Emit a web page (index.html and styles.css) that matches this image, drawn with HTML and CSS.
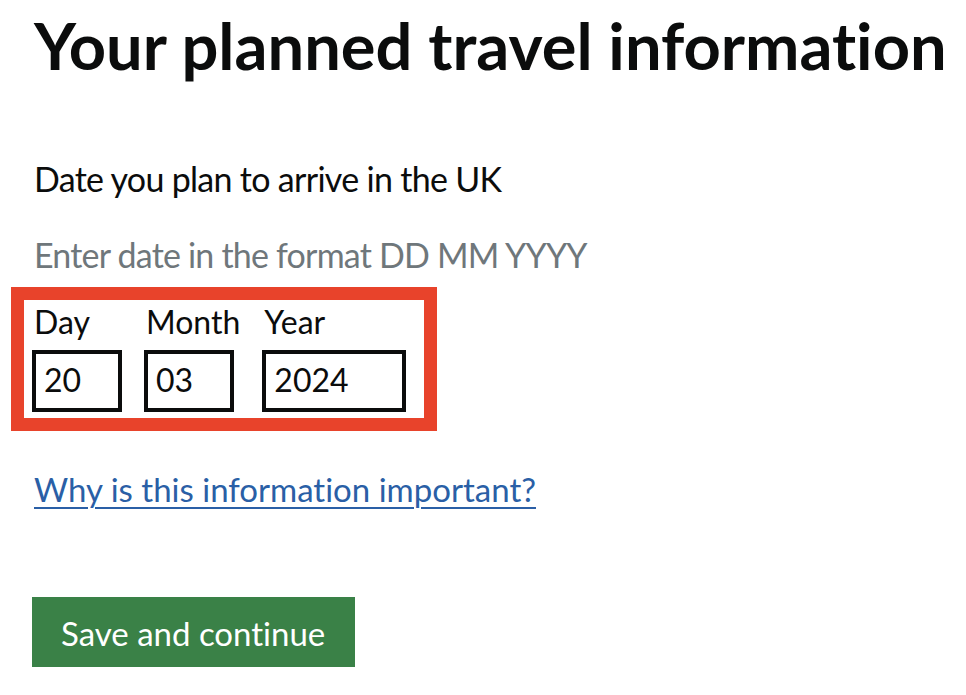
FILE: index.html
```html
<!DOCTYPE html>
<html lang="en">
<head>
<meta charset="utf-8">
<title>Your planned travel information</title>
<link rel="stylesheet" href="styles.css">
</head>
<body>
<main class="page">
  <h1 class="title">Your planned travel information</h1>
  <div class="question">Date you plan to arrive in the UK</div>
  <div class="hint">Enter date in the format DD MM YYYY</div>
  <div class="highlight">
    <div class="date-item day">
      <label class="date-label">Day</label>
      <div class="date-input w2">20</div>
    </div>
    <div class="date-item month">
      <label class="date-label">Month</label>
      <div class="date-input w2">03</div>
    </div>
    <div class="date-item year">
      <label class="date-label">Year</label>
      <div class="date-input w4">2024</div>
    </div>
  </div>
  <a class="link" href="#">Why is this information important?</a>
  <button class="button" type="button">Save and continue</button>
</main>
</body>
</html>
```

FILE: styles.css
```css
html, body {
  margin: 0;
  padding: 0;
  background: #ffffff;
}
body {
  font-family: Lato, "Liberation Sans", sans-serif;
  font-variant-ligatures: none;
  color: #0b0c0c;
}
.page {
  display: flex;
  flex-direction: column;
  align-items: flex-start;
  padding: 0 0 0 34px;
}
.title {
  margin: 7px 0 0 0;
  font-size: 65px;
  font-weight: 700;
  line-height: 76px;
  white-space: nowrap;
}
.question {
  margin-top: 74px;
  font-size: 34px;
  line-height: 44px;
  letter-spacing: -0.7px;
}
.hint {
  margin-top: 32px;
  font-size: 34px;
  line-height: 44px;
  letter-spacing: -0.8px;
  color: #6f777b;
}
.highlight {
  display: flex;
  margin: 10px 0 0 -23px;
  padding: 0 18px 6px 8px;
  border: 13px solid #e8432b;
}
.date-item {
  display: flex;
  flex-direction: column;
  margin-right: 22px;
}
.date-item.year { margin-right: 0; }
.date-label {
  font-size: 32px;
  line-height: 44px;
  padding-left: 2px;
  margin-bottom: 6px;
}
.date-input {
  box-sizing: border-box;
  height: 62px;
  border: 4px solid #0b0c0c;
  font-size: 32px;
  line-height: 52px;
  padding-left: 8px;
}
.w2 { width: 90px; }
.w4 { width: 144px; }
.link {
  margin-top: 36px;
  font-size: 33px;
  line-height: 44px;
  color: #2a5fa6;
  text-decoration: underline;
  text-underline-offset: 5px;
  text-decoration-thickness: 2px;
}
.button {
  margin: 86px 0 0 -2px;
  border: 0;
  background: #3a8147;
  color: #ffffff;
  font-family: Lato, "Liberation Sans", sans-serif;
  font-variant-ligatures: none;
  font-size: 33px;
  line-height: 40px;
  padding: 16px 30px 14px 29px;
  box-shadow: 0 3px 0 #1a3a20;
}
```
